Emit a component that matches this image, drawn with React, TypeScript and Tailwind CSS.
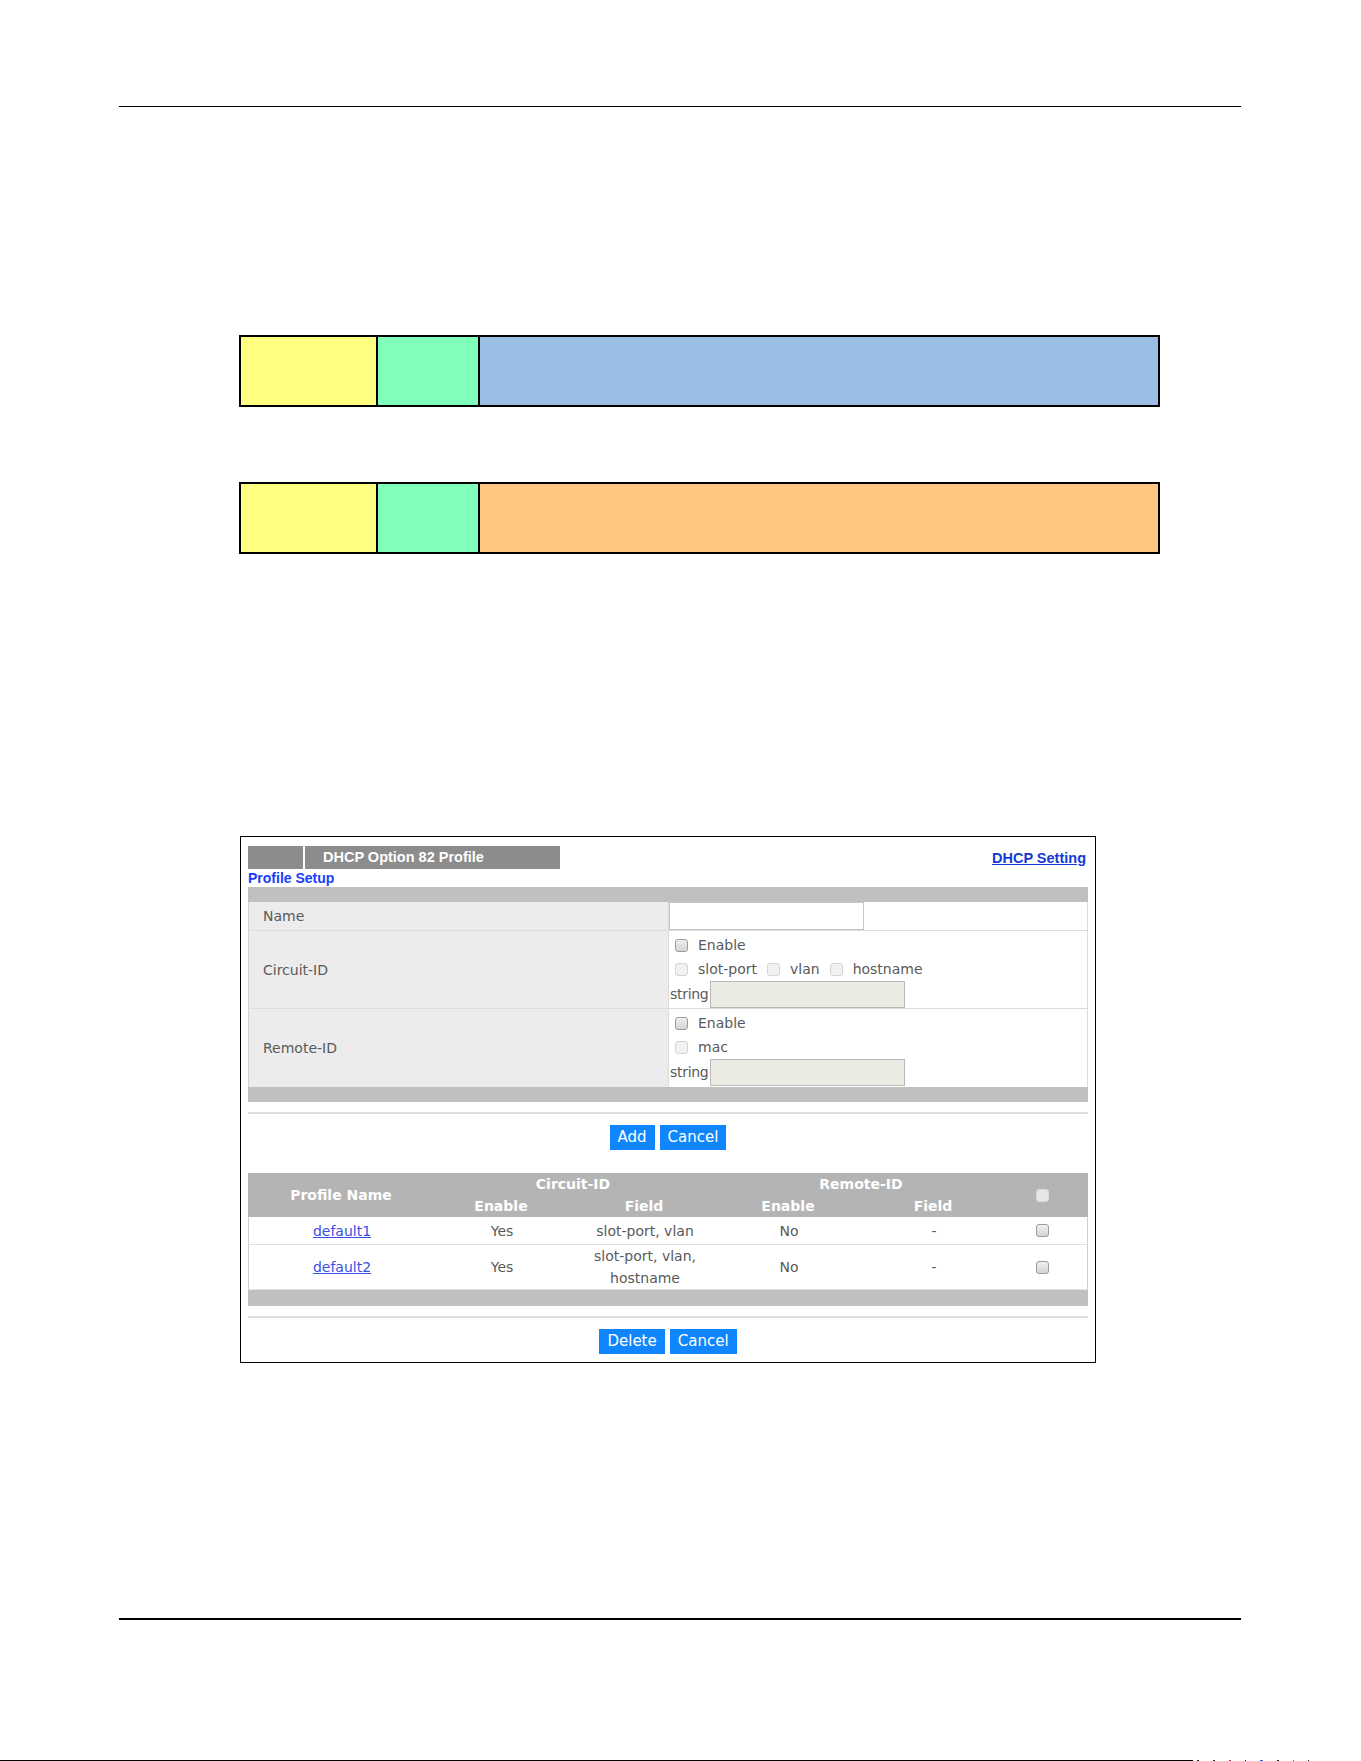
import React from "react";

const BODY_FONT = "font-['DejaVu_Sans',sans-serif]";
const ARIAL = "font-['Liberation_Sans',Arial,sans-serif]";

// small grey tick box in the old WebKit look
function Tick({ disabled = false, light = false }: { disabled?: boolean; light?: boolean }) {
  let tone = "border-[#9c9c9c] bg-gradient-to-b from-[#f0f0f0] to-[#d4d4d4]";
  if (disabled) tone = "border-[#d4d4d4] bg-[#f1f1f1]";
  if (light) tone = "border-[#d9d9d9] bg-[#e6e6e6]";
  return <span className={`inline-block h-[13px] w-[13px] shrink-0 rounded-[3px] border ${tone}`} />;
}

function Btn({ children }: { children: React.ReactNode }) {
  return (
    <button className={`h-[25px] bg-[#0f86fd] px-[8px] text-[15px] leading-[25px] text-white ${BODY_FONT}`}>
      {children}
    </button>
  );
}

// a header/footer frame of three coloured fields
function FrameBar({ tail, top }: { tail: string; top: string }) {
  return (
    <div className={`ml-[239px] flex h-[72px] w-[921px] border-2 border-black ${top}`}>
      <div className="w-[137px] border-r-2 border-black bg-[#ffff80]" />
      <div className="w-[102px] border-r-2 border-black bg-[#80ffbb]" />
      <div className={`flex-1 ${tail}`} />
    </div>
  );
}

function SetupRow({
  label,
  children,
  last = false,
}: {
  label: string;
  children: React.ReactNode;
  last?: boolean;
}) {
  return (
    <div className={`flex ${last ? "" : "border-b border-[#dcdcdc]"}`}>
      <div className="flex w-[420px] items-center border-l border-[#d2d2d2] bg-[#ececec] pl-[14px] pt-[1px] text-[14px] text-[#5a5a5a]">
        {label}
      </div>
      <div className="flex-1 border-l border-r border-[#dcdcdc] bg-white">{children}</div>
    </div>
  );
}

function Opt({ label, disabled = false }: { label: string; disabled?: boolean }) {
  return (
    <span className="flex items-center gap-[10px] pr-[10px]">
      <Tick disabled={disabled} />
      <span className="text-[14px] text-[#5a5a5a]">{label}</span>
    </span>
  );
}

function StringField() {
  return (
    <div className="flex items-center gap-[2px] pl-[1px]">
      <span className="text-[14px] tracking-[-0.3px] text-[#5a5a5a]">string</span>
      <div className="h-[27px] w-[195px] border border-[#b9b9b9] bg-[#ebebe4]" />
    </div>
  );
}

const COLS = "grid grid-cols-[186px_134px_152px_136px_154px_1fr]";

const profiles = [
  { name: "default1", cEnable: "Yes", cField: "slot-port, vlan", rEnable: "No", rField: "-", h: "h-[27px]" },
  { name: "default2", cEnable: "Yes", cField: "slot-port, vlan, hostname", rEnable: "No", rField: "-", h: "h-[44px]" },
];

// stray scan marks along the lower edge
const marks = [
  { w: "w-[2px]", c: "bg-[#222]" },
  { w: "w-[2px]", c: "bg-[#333]" },
  { w: "w-[2px]", c: "bg-[#d33]" },
  { w: "w-[1px]", c: "bg-[#222]" },
  { w: "w-[3px]", c: "bg-[#36c]" },
  { w: "w-[2px]", c: "bg-[#222]" },
  { w: "w-[1px]", c: "bg-[#36c]" },
  { w: "w-[1px]", c: "bg-[#222]" },
];

export default function App() {
  return (
    <div className={`min-h-[1761px] w-full bg-white ${BODY_FONT}`}>
      <div className="pt-[106px]">
        <div className="ml-[119px] h-px w-[1122px] bg-black" />
      </div>

      <FrameBar top="mt-[228px]" tail="bg-[#9bbfe4]" />
      <FrameBar top="mt-[75px]" tail="bg-[#fec681]" />

      {/* DHCP Option 82 profile panel */}
      <div className="ml-[240px] mt-[282px] w-[856px] border border-black px-[7px] pb-[8px] pt-[9px]">
        <div className="flex items-start justify-between">
          <div className="flex h-[23px] w-[312px] bg-[#8c8c8c]">
            <div className="w-[55px]" />
            <div className="w-[2px] bg-white" />
            <div className={`flex items-center pl-[18px] text-[14.5px] font-bold text-white ${ARIAL}`}>
              DHCP Option 82 Profile
            </div>
          </div>
          <a className={`mr-[2px] mt-[3px] text-[14.5px] font-bold leading-[18px] text-[#1539d6] underline ${ARIAL}`}>
            DHCP Setting
          </a>
        </div>
        <div className={`h-[18px] text-[14px] font-bold leading-[18px] text-[#1a3cff] ${ARIAL}`}>Profile Setup</div>

        <div className="h-[15px] bg-[#c0c0c0]" />
        <SetupRow label="Name">
          <div className="h-[28px] w-[195px] border border-[#c6c6c6] bg-white" />
        </SetupRow>
        <SetupRow label="Circuit-ID">
          <div className="flex h-[77px] flex-col">
            <div className="flex h-[26px] items-center pl-[6px] pt-[2px]">
              <Opt label="Enable" />
            </div>
            <div className="flex h-[24px] items-center pl-[6px]">
              <Opt label="slot-port" disabled />
              <Opt label="vlan" disabled />
              <Opt label="hostname" disabled />
            </div>
            <StringField />
          </div>
        </SetupRow>
        <SetupRow label="Remote-ID" last>
          <div className="flex h-[78px] flex-col">
            <div className="flex h-[26px] items-center pl-[6px] pt-[2px]">
              <Opt label="Enable" />
            </div>
            <div className="flex h-[24px] items-center pl-[6px]">
              <Opt label="mac" disabled />
            </div>
            <StringField />
          </div>
        </SetupRow>
        <div className="h-[15px] bg-[#c0c0c0]" />

        <div className="mt-[10px] h-[2px] bg-[#dddddd]" />
        <div className="mt-[11px] flex justify-center gap-[5px]">
          <Btn>Add</Btn>
          <Btn>Cancel</Btn>
        </div>

        {/* profile list */}
        <div className={`mt-[23px] h-[44px] grid-rows-[22px_22px] bg-[#b4b4b4] text-[14px] font-bold text-white ${COLS}`}>
          <div className="row-span-2 flex items-center justify-center">Profile Name</div>
          <div className="col-span-2 flex items-center justify-center pr-[8px]">Circuit-ID</div>
          <div className="col-span-2 flex items-center justify-center pr-[8px]">Remote-ID</div>
          <div className="row-span-2 flex items-center pl-[26px]">
            <Tick light />
          </div>
          <div className="flex items-center justify-center">Enable</div>
          <div className="flex items-center justify-center">Field</div>
          <div className="flex items-center justify-center">Enable</div>
          <div className="flex items-center justify-center">Field</div>
        </div>
        {profiles.map((p) => (
          <div
            key={p.name}
            className={`${COLS} ${p.h} box-content border-b border-l border-r border-b-[#e0e0e0] border-l-[#cfcfcf] border-r-[#cfcfcf] text-[14px] leading-[22px] text-[#5a5a5a]`}
          >
            <div className="flex items-center justify-center">
              <a className="text-[#3b50e6] underline">{p.name}</a>
            </div>
            <div className="flex items-center justify-center">{p.cEnable}</div>
            <div className="flex items-center justify-center px-[10px] text-center">{p.cField}</div>
            <div className="flex items-center justify-center">{p.rEnable}</div>
            <div className="flex items-center justify-center">{p.rField}</div>
            <div className="flex items-center pl-[25px]">
              <Tick />
            </div>
          </div>
        ))}
        <div className="h-[16px] bg-[#c0c0c0]" />

        <div className="mt-[10px] h-[2px] bg-[#dddddd]" />
        <div className="mt-[11px] flex justify-center gap-[5px]">
          <Btn>Delete</Btn>
          <Btn>Cancel</Btn>
        </div>
      </div>

      <div className="ml-[119px] mt-[255px] h-[2px] w-[1122px] bg-black" />
      <div className="mt-[140px] flex h-px">
        <div className="w-[1193px] bg-black" />
        <div className="ml-[4px] flex gap-[14px]">
          {marks.map((m, i) => (
            <div key={i} className={`${m.w} ${m.c}`} />
          ))}
        </div>
      </div>
    </div>
  );
}
